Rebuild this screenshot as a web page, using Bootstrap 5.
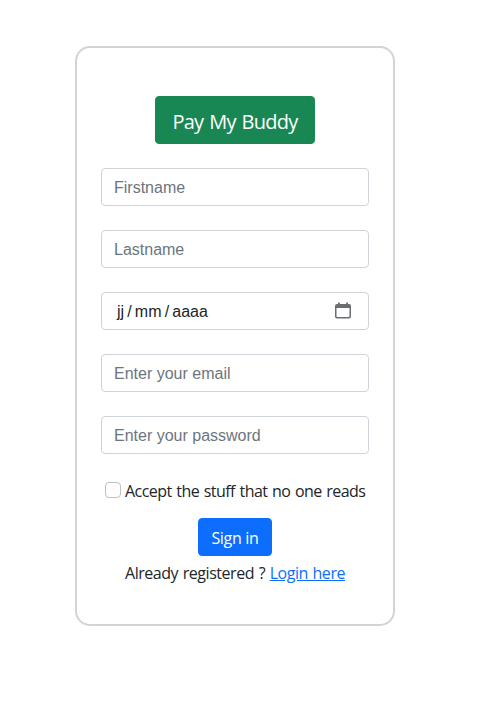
<!DOCTYPE html>
<html lang="en">
<head>
<meta charset="utf-8">
<meta name="viewport" content="width=device-width, initial-scale=1">
<title>Pay My Buddy</title>
<link href="https://cdn.jsdelivr.net/npm/bootstrap@5.3.0/dist/css/bootstrap.min.css" rel="stylesheet">
<style>
body { font-family: "Segoe UI", "Open Sans", "Noto Sans", sans-serif; letter-spacing: -.46px; word-spacing: .9px; }
.signup-box { width: 320px; height: 580px; margin: 46px 0 0 75px; padding: 48px 24px 0; border: 2px solid lightgray; border-radius: 15px; }
.btn { border-radius: 4px; }
.brand-btn { width: 160px; height: 48px; font-size: 20px; padding: 10px 0 8px; letter-spacing: -.7px; word-spacing: 1.2px; }
.signin-btn { width: 74px; height: 38px; padding: 7px 0 5px; letter-spacing: -.3px; }
.form-control { height: 38px; padding: 7px 12px 5px; border-color: #ced4da; border-radius: 4px; font-family: Arial, "Liberation Sans", sans-serif; letter-spacing: 0; word-spacing: 0; color: #212529; }
.form-control::placeholder { color: #6c757d; }
.date-field { padding: 6px 16px 6px 15px; }
.date-text { padding-top: 1px; word-spacing: -1.3px; }
.form-check-input { width: 16px; height: 16px; margin: 0 4px 2px 0; border-color: #bfbfbf; }
.terms { height: 24px; padding-left: 4px; margin: 25px 0 15px; white-space: nowrap; letter-spacing: -.53px; }
.login-line { margin-top: 5px; white-space: nowrap; }
</style>
</head>
<body>
<form class="signup-box d-flex flex-column">
  <button type="button" class="btn btn-success brand-btn align-self-center mb-4">Pay My Buddy</button>
  <input type="text" class="form-control mb-4" placeholder="Firstname">
  <input type="text" class="form-control mb-4" placeholder="Lastname">
  <div class="form-control date-field d-flex justify-content-between align-items-center mb-4">
    <span class="date-text">jj / mm / aaaa</span>
    <svg width="18" height="18" viewBox="0 0 18 18"><path fill="#6b6e70" fill-rule="evenodd" d="M4 .5h1.800V2h6.400V.5H14V2h1a2 2 0 0 1 2 2v10.500a2 2 0 0 1-2 2H3a2 2 0 0 1-2-2V4a2 2 0 0 1 2-2h1zM2.500 6v8.200q0 .8.8.8h11.400q.8 0 .8-.8V6z"/></svg>
  </div>
  <input type="email" class="form-control mb-4" placeholder="Enter your email">
  <input type="password" class="form-control" placeholder="Enter your password">
  <div class="terms d-flex align-items-center">
    <input class="form-check-input" type="checkbox" id="terms">
    <label for="terms">Accept the stuff that no one reads</label>
  </div>
  <button type="button" class="btn btn-primary signin-btn align-self-center">Sign in</button>
  <div class="login-line text-center">Already registered ? <a href="#">Login here</a></div>
</form>
<script src="https://cdn.jsdelivr.net/npm/bootstrap@5.3.0/dist/js/bootstrap.bundle.min.js"></script>
</body>
</html>
